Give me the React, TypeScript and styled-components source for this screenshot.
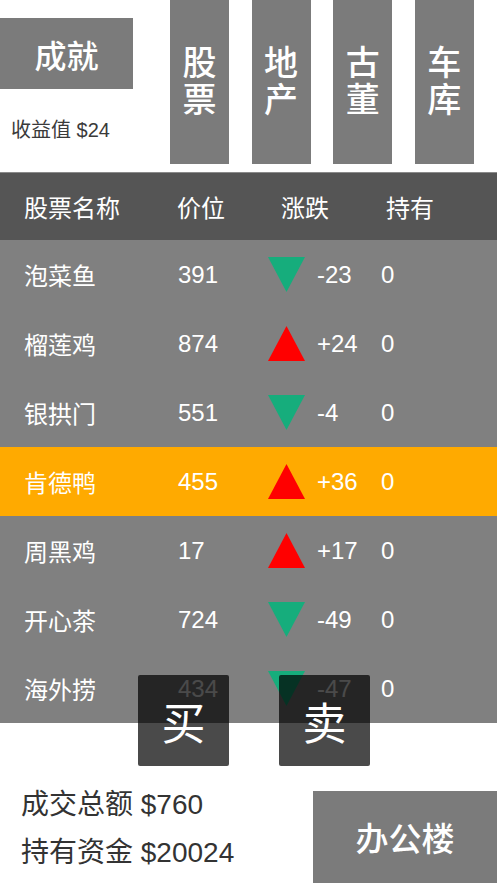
import React from "react";
import styled, { createGlobalStyle } from "styled-components";

const Global = createGlobalStyle`
  html, body { margin: 0; padding: 0; background: #ffffff; }
  body { font-family: "Liberation Sans", "Noto Sans CJK SC", sans-serif; }
  * { box-sizing: border-box; }
`;

const Page = styled.div`
  width: 497px;
  height: 883px;
  overflow: hidden;
  display: flex;
  flex-direction: column;
  background: #ffffff;
`;

const Top = styled.div`
  height: 172px;
  display: flex;
`;

const LeftCol = styled.div`
  width: 170px;
  display: flex;
  flex-direction: column;
`;

const AchieveButton = styled.div`
  margin-top: 18px;
  width: 133px;
  height: 71px;
  background: #7b7b7b;
  color: #ffffff;
  font-size: 32px;
  font-weight: 500;
  display: flex;
  align-items: center;
  justify-content: center;
`;

const Earn = styled.div`
  margin-top: 29px;
  padding-left: 11px;
  font-size: 20px;
  line-height: 24px;
  color: #3a3a3a;
`;

const Tabs = styled.div`
  display: flex;
  gap: 22.6px;
  height: 164px;
`;

const TallTab = styled.div`
  width: 59px;
  height: 164px;
  background: #7b7b7b;
  color: #ffffff;
  font-size: 34px;
  font-weight: 500;
  line-height: 37px;
  display: flex;
  flex-direction: column;
  align-items: center;
  justify-content: center;
`;

const Header = styled.div`
  height: 68px;
  background: #555555;
  border-top: 1px solid #8a8a8a;
  display: flex;
  align-items: center;
  padding-left: 24px;
  color: #ffffff;
  font-size: 24px;
`;

const HeadCell = styled.div<{ $w?: number }>`
  width: ${(p) => (p.$w ? `${p.$w}px` : "auto")};
  flex: none;
`;

const Table = styled.div`
  background: #808080;
  display: flex;
  flex-direction: column;
`;

const Row = styled.div<{ $active?: boolean }>`
  height: 69px;
  display: flex;
  align-items: center;
  padding-left: 24px;
  background: ${(p) => (p.$active ? "#ffaa00" : "transparent")};
  color: #ffffff;
  font-size: 24px;
`;

const Cell = styled.div<{ $w: number }>`
  width: ${(p) => p.$w}px;
  flex: none;
`;

const Arrow = styled.svg`
  width: 37px;
  height: 35px;
  margin-right: 12px;
  flex: none;
  display: block;
`;

const ActionBar = styled.div`
  position: relative;
  z-index: 2;
  margin-top: -48px;
  height: 91px;
  display: flex;
  gap: 50px;
  padding-left: 138px;
`;

const ActionButton = styled.div`
  width: 91px;
  height: 91px;
  border-radius: 2px;
  background: rgba(0, 0, 0, 0.71);
  color: #ffffff;
  font-size: 44px;
  display: flex;
  align-items: center;
  justify-content: center;
`;

const Bottom = styled.div`
  flex: 1;
  display: flex;
  justify-content: space-between;
`;

const Stats = styled.div`
  padding-top: 15px;
  padding-left: 21px;
  display: flex;
  flex-direction: column;
`;

const Stat = styled.div`
  font-size: 28px;
  line-height: 48px;
  color: #333333;
  white-space: nowrap;
`;

const OfficeButton = styled.div`
  margin-top: 25px;
  width: 184px;
  height: 92px;
  background: #7b7b7b;
  color: #ffffff;
  font-size: 33px;
  font-weight: 500;
  display: flex;
  align-items: center;
  justify-content: center;
`;

type Stock = { name: string; price: number; change: number };

const stocks: Stock[] = [
  { name: "泡菜鱼", price: 391, change: -23 },
  { name: "榴莲鸡", price: 874, change: 24 },
  { name: "银拱门", price: 551, change: -4 },
  { name: "肯德鸭", price: 455, change: 36 },
  { name: "周黑鸡", price: 17, change: 17 },
  { name: "开心茶", price: 724, change: -49 },
  { name: "海外捞", price: 434, change: -47 },
];

const TrendIcon: React.FC<{ up: boolean }> = ({ up }) => (
  <Arrow viewBox="0 0 37 35">
    {up ? (
      <polygon points="18.5,0 37,35 0,35" fill="#ff0000" />
    ) : (
      <polygon points="0,0 37,0 18.5,35" fill="#16ad7c" />
    )}
  </Arrow>
);

export default function App() {
  return (
    <>
      <Global />
      <Page>
        <Top>
          <LeftCol>
            <AchieveButton>成就</AchieveButton>
            <Earn>收益值 $24</Earn>
          </LeftCol>
          <Tabs>
            {[
              ["股", "票"],
              ["地", "产"],
              ["古", "董"],
              ["车", "库"],
            ].map(([a, b]) => (
              <TallTab key={a}>
                <span>{a}</span>
                <span>{b}</span>
              </TallTab>
            ))}
          </Tabs>
        </Top>
        <Header>
          <HeadCell $w={153}>股票名称</HeadCell>
          <HeadCell $w={104}>价位</HeadCell>
          <HeadCell $w={105}>涨跌</HeadCell>
          <HeadCell>持有</HeadCell>
        </Header>
        <Table>
          {stocks.map((s, i) => (
            <Row key={s.name} $active={i === 3}>
              <Cell $w={154}>{s.name}</Cell>
              <Cell $w={90}>{s.price}</Cell>
              <TrendIcon up={s.change > 0} />
              <Cell $w={64}>{s.change > 0 ? `+${s.change}` : s.change}</Cell>
              <Cell $w={40}>0</Cell>
            </Row>
          ))}
        </Table>
        <ActionBar>
          <ActionButton>买</ActionButton>
          <ActionButton>卖</ActionButton>
        </ActionBar>
        <Bottom>
          <Stats>
            <Stat>成交总额 $760</Stat>
            <Stat>持有资金 $20024</Stat>
          </Stats>
          <OfficeButton>办公楼</OfficeButton>
        </Bottom>
      </Page>
    </>
  );
}
